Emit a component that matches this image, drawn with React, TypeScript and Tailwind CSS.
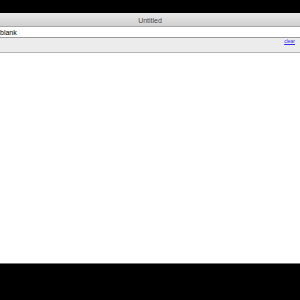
export default function App() {
  return (
    <div className="w-[300px] h-[300px] bg-black flex flex-col overflow-hidden">
      <div className="h-[13px] bg-black" />
      <div className="h-[14px] bg-gradient-to-b from-[#e9e9e9] to-[#d0d0d0] border-b border-[#a8a8a8] flex items-center justify-center pt-[1px]">
        <span className="text-[7px] leading-none text-[#4a4a4a] font-['Liberation_Sans',sans-serif]">Untitled</span>
      </div>
      <div className="h-[11px] bg-white border-b border-[#9a9a9a] flex items-center">
        <span className="text-[7px] leading-none text-black font-['Liberation_Sans',sans-serif]">blank</span>
      </div>
      <div className="h-[15px] bg-[#ececec] border-b border-[#b5b5b5] flex items-start justify-end pr-[5px] pt-[1px]">
        <a href="#" className="text-[5px] leading-none text-[#3030ee] underline font-['Liberation_Sans',sans-serif]">clear</a>
      </div>
      <div className="flex-1 bg-white border-b border-[#777777]" />
      <div className="h-[36px] bg-black" />
    </div>
  );
}
